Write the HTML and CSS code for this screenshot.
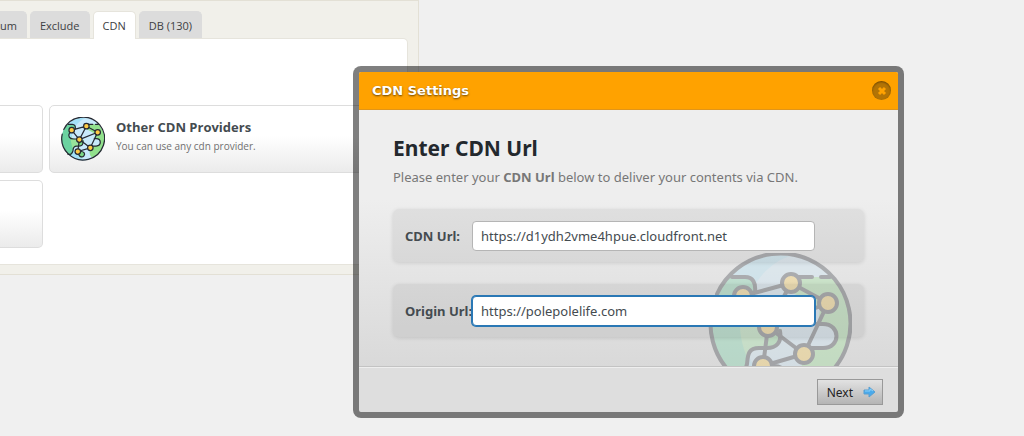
FILE: index.html
```html
<!DOCTYPE html>
<html lang="en">
<head>
<meta charset="utf-8">
<title>CDN Settings</title>
<link rel="stylesheet" href="styles.css">
</head>
<body>
  <svg class="defs" aria-hidden="true">
    <defs>
      <clipPath id="disc"><circle cx="72" cy="72" r="70"/></clipPath>
    </defs>
    <symbol id="globe" viewBox="0 0 144 144">
      <g clip-path="url(#disc)">
        <rect width="144" height="144" fill="#a4e1f8"/>
        <path d="M144 0H96C60 4 38 34 34 72c2 36 22 64 54 72h56z" fill="#c8e9fb"/>
        <path d="M0 24h37c8 0 10 7 10 14l-12 6-9 14c0 10 6 14 18 14h16l-4 23c-10 0-16 3-16 12 0 14-6 20-16 19H0z" fill="#6bd3a0"/>
        <path d="M34 55c-2 8 0 17 12 17h14l-4 23c-10 0-16 3-16 12-8-20-10-34-6-52z" fill="#98e39b"/>
        <path d="M83 24h61v110h-38c-14-4-14-20-10-33l2-6h17c18 0 18-24 0-24h-5l2-16-29-16z" fill="#91e08c"/>
        <path d="M60 74l14 2c0 12-4 19-16 19zM55 113c16-4 22 2 22 10s-12 14-18 6z" fill="#7bd887"/>
      </g>
      <g fill="none" stroke="#262a33" stroke-width="4" stroke-linecap="round" stroke-linejoin="round">
        <path d="M9 41A70 70 0 1 1 4 56"/>
        <path d="M24 24h13c8 0 11 6 10 15M83 24h21M113 24h9"/>
        <path d="M35 43L83 30l37 20-24 51-41 12 5-39zM83 30L60 74l60-24M60 74l36 27"/>
        <path d="M28 52c-6 10-1 20 14 20h18M109 71h6c18 0 18 24 0 24H98"/>
        <path d="M72 78c2 12-4 17-13 17h-8c-12 0-11 9-12 16-2 9-9 14-17 10M64 113c12-1 16 8 11 14s-14 4-17-4"/>
      </g>
      <g fill="#ffcb45" stroke="#262a33" stroke-width="4">
        <circle cx="35" cy="43" r="9"/>
        <circle cx="83" cy="30" r="9"/>
        <circle cx="120" cy="50" r="9"/>
        <circle cx="60" cy="74" r="9"/>
        <circle cx="96" cy="101" r="9"/>
        <circle cx="55" cy="113" r="9"/>
      </g>
    </symbol>
  </svg>

  <div class="page">
    <div class="panel">
      <div class="tabs">
        <button type="button" class="tab first">um</button>
        <button type="button" class="tab">Exclude</button>
        <button type="button" class="tab active">CDN</button>
        <button type="button" class="tab">DB (130)</button>
      </div>
      <div class="content">
        <div class="card left"></div>
        <div class="card">
          <svg class="card-icon" aria-hidden="true"><use href="#globe"/></svg>
          <div>
            <h2>Other CDN Providers</h2>
            <p>You can use any cdn provider.</p>
          </div>
        </div>
        <div class="card left"></div>
      </div>
    </div>
  </div>

  <form class="modal">
    <div class="modal-head">
      <span>CDN Settings</span>
      <button type="button" class="close" aria-label="Close">
        <svg width="10" height="10" viewBox="0 0 10 10"><path d="M2 2l6 6M8 2l-6 6" stroke="#ffa200" stroke-width="3"/></svg>
      </button>
    </div>
    <div class="modal-body">
      <svg class="watermark" aria-hidden="true"><use href="#globe"/></svg>
      <h1>Enter CDN Url</h1>
      <p>Please enter your <b>CDN Url</b> below to deliver your contents via CDN.</p>
      <div class="field">
        <label for="cdn-url">CDN Url:</label>
        <input type="text" id="cdn-url" value="https://d1ydh2vme4hpue.cloudfront.net">
      </div>
      <div class="field">
        <label for="origin-url">Origin Url:</label>
        <input type="text" id="origin-url" class="focused" value="https://polepolelife.com">
      </div>
    </div>
    <div class="modal-foot">
      <button type="button" class="next">Next
        <svg width="13" height="12" viewBox="0 0 13 12"><path d="M1 4h5V1l6 5-6 5V8H1z" fill="#49aaec" stroke="#5a9fd0"/><path d="M2 5h5V3l3 2" fill="none" stroke="#8bd0fa"/></svg>
      </button>
    </div>
  </form>
</body>
</html>
```
FILE: styles.css
```css
* { box-sizing: border-box; }
body {
  margin: 0;
  background: #f0f0f0;
  color: #444b50;
  font-family: "Noto Sans", "Open Sans", sans-serif;
}
h1, h2, p { margin: 0; }
button, input { font-family: inherit; }
.defs { position: absolute; width: 0; height: 0; }

.page {
  display: grid;
  grid-template-columns: 9fr 13fr;
}
.panel {
  background: #f1f0ea;
  border: 1px solid #e3e0d5;
  border-left: 0;
  padding: 10px 10px 9px 0;
}
.tabs { display: flex; gap: 3px; }
.tab {
  height: 27px;
  padding: 0 9px;
  border: 1px solid #dcdcdc;
  border-bottom: 0;
  border-radius: 5px 5px 0 0;
  background: #dcdcdc;
  color: #3c4043;
  font-family: "Open Sans", sans-serif;
  font-size: 11px;
}
.tab.first { padding-left: 0; border-left: 0; border-top-left-radius: 0; }
.tab.active {
  height: 28px;
  margin-bottom: -1px;
  background: #fff;
  border-color: #e6e4dc;
  z-index: 1;
}
.content {
  display: grid;
  grid-template-columns: 43px 1fr;
  grid-auto-rows: 68px;
  gap: 6px;
  row-gap: 7px;
  padding: 66px 8px 16px 0;
  background: #fff;
  border: 1px solid #e6e4dc;
  border-left: 0;
  border-top-right-radius: 5px;
}
.card {
  display: flex;
  gap: 11px;
  padding: 11px;
  border: 1px solid #ddd;
  border-radius: 5px;
  background: linear-gradient(#fff 45%, #ebebeb);
}
.card.left { border-left: 0; border-radius: 0 5px 5px 0; }
.card-icon { width: 44px; height: 44px; flex: none; }
.card h2 {
  font-family: "Open Sans", sans-serif;
  font-size: 13px;
  line-height: 20px;
  color: #444b50;
}
.card p {
  font-family: "Open Sans", sans-serif;
  font-size: 10px;
  line-height: 19px;
  color: #707070;
}

.modal {
  position: absolute;
  top: 66px;
  left: 353px;
  right: 120px;
  border: 6px solid rgba(0, 0, 0, .5);
  border-radius: 8px;
  background: #dedede;
  background-clip: padding-box;
}
.modal-head {
  display: flex;
  align-items: center;
  justify-content: space-between;
  height: 38px;
  padding: 0 7px 0 13px;
  background: #ffa200;
  border-bottom: 1px solid #e0951a;
  border-radius: 2px 2px 0 0;
  color: #fff;
  font: bold 13px "DejaVu Sans", sans-serif;
  text-shadow: 0 1px 2px rgba(0, 0, 0, .6);
}
.close {
  display: flex;
  align-items: center;
  justify-content: center;
  width: 19px;
  height: 19px;
  padding: 0;
  border: 0;
  border-radius: 50%;
  background: #b37405;
  box-shadow: inset 0 1px 2px rgba(0, 0, 0, .4);
}
.modal-body {
  position: relative;
  overflow: hidden;
  padding: 24px 34px 29px;
  background: linear-gradient(#eee 35%, #d9d9d9);
  border-bottom: 1px solid #c3c3c3;
}
.modal-body h1 {
  font-size: 21px;
  line-height: 28px;
  color: #23282d;
}
.modal-body p {
  margin: 5px 0 22px;
  font-size: 13px;
  line-height: 20px;
  color: #777;
}
.watermark {
  position: absolute;
  right: 46px;
  bottom: -31px;
  width: 144px;
  height: 144px;
  opacity: .3;
}
.field {
  position: relative;
  display: flex;
  align-items: center;
  height: 53px;
  padding: 0 12px;
  border-radius: 6px;
  background: rgba(0, 0, 0, .06);
  box-shadow: 0 1px 4px rgba(0, 0, 0, .12);
}
.field + .field { margin-top: 22px; }
.field label {
  flex: none;
  width: 67px;
  font-size: 13px;
  font-weight: bold;
  white-space: nowrap;
}
.field input {
  width: 343px;
  height: 30px;
  padding: 0 8px;
  border: 1px solid #b5b5b5;
  border-radius: 4px;
  outline: 0;
  background: #fff;
  color: #444b50;
  font-size: 13px;
}
.field input.focused {
  border-color: #2a78b5;
  box-shadow: 0 0 0 1px #2a78b5;
}
.modal-foot {
  display: flex;
  justify-content: flex-end;
  padding: 11px 15px 7px;
  border-top: 1px solid #eee;
}
.next {
  display: flex;
  align-items: center;
  gap: 10px;
  height: 26px;
  padding: 0 6px 0 9px;
  border: 1px solid #999;
  background: linear-gradient(#e2e2e2, #b4b4b4);
  color: #222;
  font-size: 12px;
}
```
